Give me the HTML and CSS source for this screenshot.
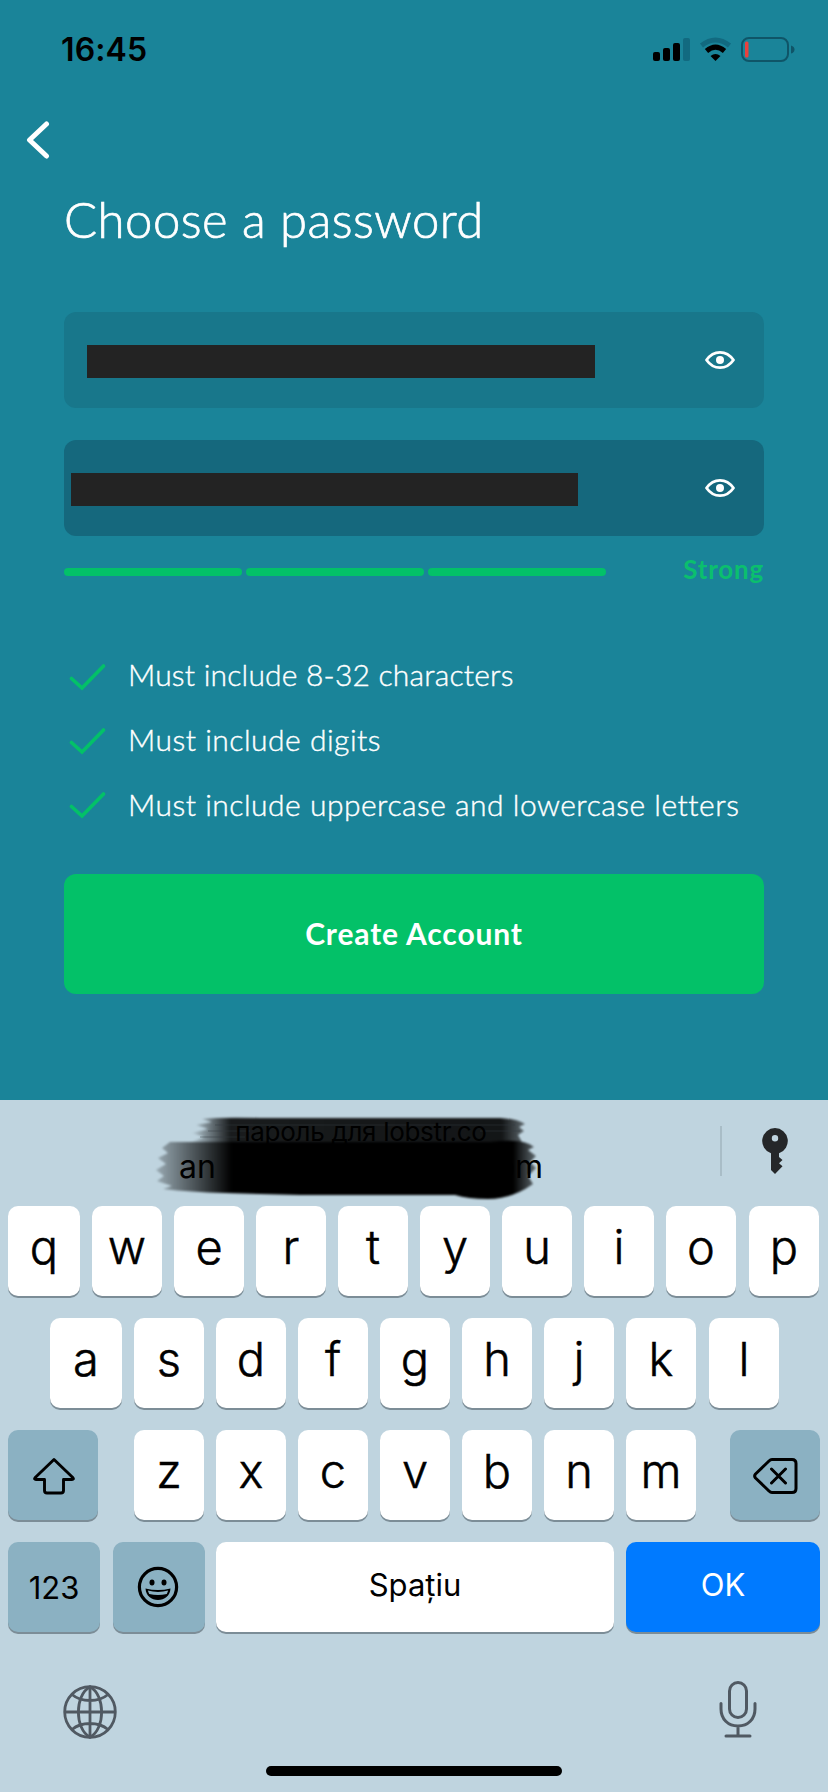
FILE: index.html
```html
<!DOCTYPE html>
<html lang="en">
<head>
<meta charset="utf-8">
<title>Choose a password</title>
<link rel="stylesheet" href="styles.css">
</head>
<body>
<div class="screen">
  <header class="status">
    <span class="clock">16:45</span>
    <svg class="status-icons" width="144" height="30" viewBox="0 0 144 30">
      <rect x="1" y="17" width="7" height="9" rx="2"/>
      <rect x="11" y="13" width="7" height="13" rx="2"/>
      <rect x="21" y="8" width="7" height="18" rx="2"/>
      <rect x="31" y="3" width="7" height="23" rx="2" fill="#126a80"/>
      <g fill="none">
        <path d="M49.5 10.5Q63.500 -0.500 77.500 10.500" stroke="#126a80" stroke-width="5"/>
        <path d="M54.500 16Q63.500 8.200 72.500 16" stroke="#000" stroke-width="5"/>
      </g>
      <path d="M63.500 26l-5-5q5-4 10 0z"/>
      <rect x="90" y="3" width="46" height="23" rx="7" fill="none" stroke="#0f5568" stroke-width="2"/>
      <rect x="93" y="6.500" width="3.500" height="16" rx="1.500" fill="#e9413d"/>
      <path d="M139 10.500q3.500 1 3.500 4t-3.500 4z" fill="#0f5568"/>
    </svg>
  </header>

  <nav class="nav">
    <svg width="24" height="40" viewBox="0 0 24 40"><path d="M20.500 4L3.500 20l17 16" fill="none" stroke="#fff" stroke-width="5" stroke-linecap="round" stroke-linejoin="round"/></svg>
  </nav>

  <main class="form">
    <h1 class="title">Choose a password</h1>
    <div class="field">
      <span class="mask"></span>
      <svg class="eye" width="32" height="20" viewBox="0 0 32 20"><path d="M2.500 10C6 5 11 2.300 16 2.300S26 5 29.500 10C26 15 21 17.700 16 17.700S6 15 2.500 10z" fill="none" stroke="#fff" stroke-width="2.800" stroke-linejoin="round"/><circle cx="16" cy="10" r="4" fill="#fff"/></svg>
    </div>
    <div class="field field-active">
      <span class="mask"></span>
      <svg class="eye" width="32" height="20" viewBox="0 0 32 20"><path d="M2.500 10C6 5 11 2.300 16 2.300S26 5 29.500 10C26 15 21 17.700 16 17.700S6 15 2.500 10z" fill="none" stroke="#fff" stroke-width="2.800" stroke-linejoin="round"/><circle cx="16" cy="10" r="4" fill="#fff"/></svg>
    </div>
    <div class="strength">
      <span class="bar"></span><span class="bar"></span><span class="bar"></span>
      <span class="strength-label">Strong</span>
    </div>
    <ul class="rules">
      <li class="rule"><svg class="tick" width="38" height="30" viewBox="0 0 38 30"><path d="M2.500 15.500l10.500 9.500L34.500 3" fill="none" stroke="#03c168" stroke-width="3.600" stroke-linecap="round"/></svg><span class="rule-a">Must include 8-32 characters</span></li>
      <li class="rule"><svg class="tick" width="38" height="30" viewBox="0 0 38 30"><path d="M2.500 15.500l10.500 9.500L34.500 3" fill="none" stroke="#03c168" stroke-width="3.600" stroke-linecap="round"/></svg><span class="rule-b">Must include digits</span></li>
      <li class="rule"><svg class="tick" width="38" height="30" viewBox="0 0 38 30"><path d="M2.500 15.500l10.500 9.500L34.500 3" fill="none" stroke="#03c168" stroke-width="3.600" stroke-linecap="round"/></svg><span class="rule-c">Must include uppercase and lowercase letters</span></li>
    </ul>
    <button class="create">Create Account</button>
  </main>

  <section class="keyboard">
    <div class="suggest">
      <svg class="scribble" width="400" height="90" viewBox="150 1112 400 90">
        <defs>
          <linearGradient id="top" x1="0" x2="1"><stop offset="0" stop-opacity="0"/><stop offset=".12" stop-opacity=".87"/><stop offset=".93" stop-opacity=".9"/><stop offset="1" stop-opacity=".5"/></linearGradient>
          <linearGradient id="low" x1="0" x2="1"><stop offset="0" stop-opacity=".2"/><stop offset=".2" stop-opacity="1"/><stop offset=".94" stop-opacity="1"/><stop offset="1" stop-opacity=".5"/></linearGradient>
          <filter id="soft" x="-5%" y="-10%" width="110%" height="120%"><feGaussianBlur stdDeviation="1.300 .8"/></filter>
        </defs>
        <g filter="url(#soft)">
          <path d="M202 1119Q220 1117 260 1118H500Q518 1119 525 1124L519 1127 524 1131 518 1135 522 1142H190L204 1137 192 1133 208 1129 196 1125 212 1122z" fill="url(#top)"/>
          <path d="M170 1142H490Q524 1138 534 1147L528 1150 536 1156 530 1162 536 1168 528 1176 533 1184Q512 1199 488 1199 468 1199 455 1195H300L225 1193Q190 1192 163 1189L172 1186 157 1181 164 1176 156 1170 166 1164 158 1158 168 1153 162 1148z" fill="url(#low)"/>
        </g>
        <g stroke="#333b40" stroke-width="1.200" opacity=".45"><path d="M215 1125H515M208 1131H250M200 1137H245M480 1131H520"/></g>
      </svg>
      <div class="suggest-text">
        <span class="suggest-title">пароль для lobstr.co</span>
        <span class="suggest-user"><span>an</span><span>om</span></span>
      </div>
      <span class="divider"></span>
      <svg class="key-icon" width="28" height="48" viewBox="0 0 28 48"><path fill-rule="evenodd" fill="#252729" d="M14 1a13 13 0 0 1 4 25.300V30l3.500 3-3.500 3.300 3.500 3L14 47l-4-4V26.300A13 13 0 0 1 14 1zm0 7a3.200 3.200 0 1 0 0 6.400A3.200 3.200 0 0 0 14 8z"/></svg>
    </div>

    <div class="row">
      <span class="k first">q</span><span class="k">w</span><span class="k">e</span><span class="k">r</span><span class="k">t</span><span class="k">y</span><span class="k">u</span><span class="k">i</span><span class="k">o</span><span class="k last">p</span>
    </div>
    <div class="row row-home">
      <span class="k first">a</span><span class="k">s</span><span class="k">d</span><span class="k">f</span><span class="k">g</span><span class="k">h</span><span class="k">j</span><span class="k">k</span><span class="k last">l</span>
    </div>
    <div class="row row-low">
      <span class="k fn"><svg width="46" height="40" viewBox="0 0 46 40"><path d="M23 3.500L4 21.800Q2.800 23.500 5 23.500H13.500V34.500Q13.500 37 16 37H30Q32.500 37 32.500 34.500V23.500H41Q43.200 23.500 42 21.800z" fill="none" stroke="#000" stroke-width="2.900" stroke-linejoin="round"/></svg></span>
      <span class="letters"><span class="k">z</span><span class="k">x</span><span class="k">c</span><span class="k">v</span><span class="k">b</span><span class="k">n</span><span class="k">m</span></span>
      <span class="k fn"><svg width="46" height="40" viewBox="0 0 46 40"><path d="M19 3.500H39Q43 3.500 43 7.500V32.500Q43 36.500 39 36.500H19Q17.500 36.500 16 35L2.500 22Q.8 20 2.500 18L16 5Q17.500 3.500 19 3.500zM18.500 13l14 14M32.500 13l-14 14" fill="none" stroke="#000" stroke-width="3" stroke-linecap="round" stroke-linejoin="round"/></svg></span>
    </div>
    <div class="row row-bottom">
      <span class="k mode">123</span>
      <span class="k mode emoji"><svg width="42" height="42" viewBox="0 0 42 42"><circle cx="21" cy="21" r="18.600" fill="none" stroke="#000" stroke-width="3.200"/><ellipse cx="15" cy="16.500" rx="2.500" ry="3"/><ellipse cx="27" cy="16.500" rx="2.500" ry="3"/><path d="M8.500 22.500Q21 25.500 33.500 22.500C33 30 27.500 34 21 34S9 30 8.500 22.500z"/><path d="M10.800 24.600Q21 27.300 31.200 24.600L29.800 28Q21 30 12.200 28z" fill="#8bb1c2"/></svg></span>
      <span class="k space">Spațiu</span>
      <span class="k ok">OK</span>
    </div>
    <footer class="dock">
      <svg width="54" height="54" viewBox="0 0 54 54"><g fill="none" stroke="#505962" stroke-width="2.800"><circle cx="27" cy="27" r="25.300"/><path d="M27 1.700V52.300M1.700 27H52.300M9 9.500Q16 15.500 27 15.500T45 9.500M9 44.500Q16 38.500 27 38.500T45 44.500"/><path d="M27 1.700C11.500 10 11.500 44 27 52.300C42.500 44 42.500 10 27 1.700z"/></g></svg>
      <svg width="40" height="58" viewBox="0 0 40 58"><g fill="none" stroke="#505962" stroke-width="3" stroke-linecap="round"><rect x="11.500" y="2.500" width="17" height="35" rx="8.500"/><path d="M3 23.500V29C3 39 10 46 20 46S37 39 37 29V23.500M20 46V56M8 56H32"/></g></svg>
    </footer>
    <div class="home"></div>
  </section>
</div>
</body>
</html>
```
FILE: styles.css
```css
* { box-sizing: border-box; }
body { margin: 0; background: #1a8499; }
svg { display: block; flex: none; }

.screen {
  width: 828px;
  height: 1792px;
  overflow: hidden;
  display: flex;
  flex-direction: column;
  background: #1a8499;
  font-family: Lato, "Liberation Sans", sans-serif;
  color: #fff;
}

.status {
  height: 100px;
  padding: 35px 32px 0 61px;
  display: flex;
  justify-content: space-between;
  color: #000;
}
.clock {
  font: 600 32px/30px Inter, sans-serif;
  letter-spacing: 0.1px;
}
.status-icons { fill: #000; }

.nav { height: 80px; padding: 20px 0 0 26px; }

.form { height: 920px; padding: 0 64px; display: flex; flex-direction: column; }
.title {
  margin: 0 0 72px;
  height: 60px;
  padding-top: 9px;
  font-size: 49px;
  line-height: 60px;
  font-weight: 300;
  letter-spacing: 0.5px;
  white-space: nowrap;
  -webkit-text-stroke: 0.7px #fff;
}
.field {
  height: 96px;
  flex: none;
  padding: 0 28px 0 23px;
  display: flex;
  align-items: center;
  justify-content: space-between;
  background: #18778b;
  border-radius: 12px;
}
.mask { width: 508px; height: 33px; margin-top: 3px; background: #232323; }
.field-active { margin-top: 32px; padding-left: 7px; background: #15687d; }
.field-active .mask { width: 507px; }

.strength { height: 72px; flex: none; display: flex; align-items: center; gap: 4px; }
.bar { width: 178px; height: 8px; border-radius: 4px; background: #03c168; }
.strength-label {
  margin-left: auto;
  margin-top: -7px;
  color: #0bbf6e;
  font-size: 26px;
  font-weight: 700;
  line-height: 30px;
  letter-spacing: 0.8px;
}

.rules {
  list-style: none;
  margin: 36px 0 38px;
  padding: 0;
  flex: none;
  height: 192px;
  display: grid;
  grid-template-rows: repeat(3, 64px);
}
.rule {
  display: flex;
  align-items: center;
  gap: 21px;
  padding-left: 5px;
  font-size: 30px;
  line-height: 40px;
  white-space: nowrap;
  font-weight: 300;
  -webkit-text-stroke: 0.4px #fff;
}
.tick { margin-top: 3px; }
.rule-a { letter-spacing: 0.2px; padding-bottom: 4px; }
.rule-b { letter-spacing: 0.5px; padding-bottom: 2px; }
.rule-c { letter-spacing: 0.5px; }

.create {
  height: 120px;
  flex: none;
  border: 0;
  border-radius: 12px;
  padding: 0 0 2px;
  background: #03c168;
  color: #fff;
  font: 700 30px/40px Lato, sans-serif;
  letter-spacing: 0.85px;
}

.keyboard {
  height: 692px;
  display: flex;
  flex-direction: column;
  background: #bfd4df;
  color: #000;
  font-family: Inter, sans-serif;
}
.suggest {
  position: relative;
  height: 106px;
  display: flex;
  flex: none;
}
.scribble { position: absolute; left: 150px; top: 12px; }
.suggest-text {
  position: relative;
  width: 720px;
  padding: 16px 0 0 2px;
  display: flex;
  flex-direction: column;
  align-items: center;
}
.suggest-title { font-size: 26px; line-height: 32px; letter-spacing: -0.3px; }
.suggest-user {
  width: 364px;
  display: flex;
  justify-content: space-between;
  font-size: 32px;
  line-height: 36px;
  padding-top: 1px;
}
.divider { width: 2px; height: 50px; margin-top: 26px; background: #a9bdc7; }
.key-icon { margin: 27px 0 0 39px; }

.row {
  flex: none;
  display: flex;
  gap: 12px;
  height: 90px;
  margin-bottom: 22px;
  padding: 0 8px;
}
.k {
  width: 70px;
  height: 90px;
  flex: none;
  display: flex;
  align-items: center;
  justify-content: center;
  padding-bottom: 10px;
  background: #fff;
  border-radius: 10px;
  box-shadow: 0 2px 0 #7c8d97;
  font-size: 47px;
  font-weight: 300;
  -webkit-text-stroke: 0.5px currentColor;
}
.first { width: 72px; }
.last { margin-left: 1px; }
.row-home { padding-left: 50px; }
.row-low { gap: 0; }
.letters { display: flex; gap: 12px; margin: 0 34px 0 36px; }
.fn { width: 90px; padding: 2px 0 0 2px; background: #8bb1c2; }
.row-bottom { margin-bottom: 0; }
.mode, .space, .ok { -webkit-text-stroke: 0; }
.mode { width: 92px; padding: 0; background: #8bb1c2; font-size: 31px; font-weight: 400; }
.mode + .mode { margin-left: 1px; }
.mode + .space { margin-left: -1px; }
.emoji { padding-right: 2px; }
.space, .ok { font-size: 31px; font-weight: 400; padding-bottom: 5px; }
.space { width: 398px; }
.ok { width: 194px; background: #007aff; color: #fff; }

.dock {
  height: 134px;
  flex: none;
  padding: 48px 70px 0 63px;
  display: flex;
  justify-content: space-between;
}
.dock svg { margin-top: 5px; }
.dock svg + svg { margin-top: 0; }
.home { width: 296px; height: 10px; margin: 0 auto; border-radius: 5px; background: #000; }
```
